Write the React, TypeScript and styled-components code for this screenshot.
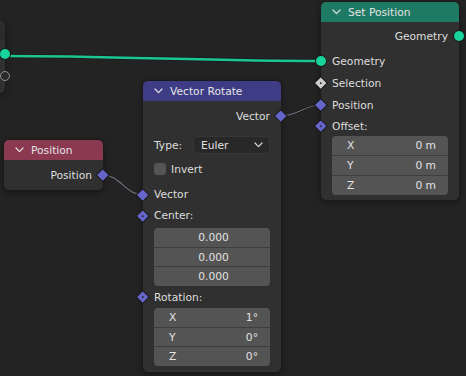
import styled, { createGlobalStyle } from "styled-components";

const GlobalStyle = createGlobalStyle`
  html, body {
    margin: 0;
    padding: 0;
    background: #232323;
  }
  body {
    font-family: "DejaVu Sans", "Liberation Sans", sans-serif;
  }
`;

type Side = "left" | "right";
type Kind = "geo" | "geoEmpty" | "vec" | "vecDot" | "selDot";

const Chevron = () => (
  <svg width="9" height="6" viewBox="0 0 9 6">
    <polyline
      points="1,1 4.5,4.6 8,1"
      fill="none"
      stroke="#e2e2e2"
      strokeWidth="1.2"
      strokeLinecap="round"
      strokeLinejoin="round"
    />
  </svg>
);

const Socket = ({ kind, side }: { kind: Kind; side: Side }) => {
  if (kind === "geo") return <Circle $side={side} />;
  if (kind === "geoEmpty") return <Ring $side={side} />;
  return (
    <Diamond $side={side} $color={kind === "selDot" ? "#cfcfcf" : "#6565cc"}>
      {kind !== "vec" && <Dot />}
    </Diamond>
  );
};

const Links = () => (
  <LinkLayer width="466" height="376" viewBox="0 0 466 376">
    <path
      d="M 5 56 C 110 56, 214 61, 321 61"
      fill="none"
      stroke="#161616"
      strokeWidth="4"
      opacity="0.6"
    />
    <path
      d="M 5 56 C 110 56, 214 61, 321 61"
      fill="none"
      stroke="#1cc692"
      strokeWidth="2.4"
    />
    <path
      d="M 103 175 C 120 175, 126 195, 143 195"
      fill="none"
      stroke="#1a1a1a"
      strokeWidth="2.6"
      opacity="0.7"
    />
    <path
      d="M 103 175 C 120 175, 126 195, 143 195"
      fill="none"
      stroke="#6b6b78"
      strokeWidth="1.2"
    />
    <path
      d="M 281 116 C 298 116, 304 105, 321 105"
      fill="none"
      stroke="#1a1a1a"
      strokeWidth="2.6"
      opacity="0.7"
    />
    <path
      d="M 281 116 C 298 116, 304 105, 321 105"
      fill="none"
      stroke="#6b6b78"
      strokeWidth="1.2"
    />
  </LinkLayer>
);

const App = () => {
  return (
    <>
      <GlobalStyle />
      <Canvas>
        <Links />

        {/* partly hidden node on the left edge */}
        <Node $x={-130} $y={20} $w={135}>
          <Header $color="#2b2b2b" />
          <Body $top={3} $bottom={6}>
            <Row $h={22} $out>
              <Socket kind="geo" side="right" />
            </Row>
            <Row $h={22} $out>
              <Socket kind="geoEmpty" side="right" />
            </Row>
          </Body>
        </Node>

        <Node $x={321} $y={2} $w={138}>
          <Header $color="#1e7a62">
            <Chevron />
            <Title>Set Position</Title>
          </Header>
          <Body $top={3} $bottom={5}>
            <Row $h={22} $out>
              Geometry
              <Socket kind="geo" side="right" />
            </Row>
            <Row $h={22} $mt={3}>
              <Socket kind="geo" side="left" />
              Geometry
            </Row>
            <Row $h={22}>
              <Socket kind="selDot" side="left" />
              Selection
            </Row>
            <Row $h={22}>
              <Socket kind="vec" side="left" />
              Position
            </Row>
            <Row $h={20}>
              <Socket kind="vecDot" side="left" />
              Offset:
            </Row>
            <Fields $h={59}>
              <Field>
                <span>X</span>
                <span>0 m</span>
              </Field>
              <Field>
                <span>Y</span>
                <span>0 m</span>
              </Field>
              <Field>
                <span>Z</span>
                <span>0 m</span>
              </Field>
            </Fields>
          </Body>
        </Node>

        <Node $x={143} $y={81} $w={138}>
          <Header $color="#3d3c85">
            <Chevron />
            <Title>Vector Rotate</Title>
          </Header>
          <Body $top={4} $bottom={6}>
            <Row $h={22} $out>
              Vector
              <Socket kind="vec" side="right" />
            </Row>
            <Row $h={20} $mt={8}>
              Type:
              <Dropdown>
                Euler
                <svg width="9" height="6" viewBox="0 0 9 6">
                  <polyline
                    points="1,1 4.5,4.6 8,1"
                    fill="none"
                    stroke="#d8d8d8"
                    strokeWidth="1.2"
                    strokeLinecap="round"
                    strokeLinejoin="round"
                  />
                </svg>
              </Dropdown>
            </Row>
            <Row $h={20} $mt={4}>
              <Checkbox />
              Invert
            </Row>
            <Row $h={21} $mt={5}>
              <Socket kind="vec" side="left" />
              Vector
            </Row>
            <Row $h={21}>
              <Socket kind="vecDot" side="left" />
              Center:
            </Row>
            <Fields $h={58} $mt={2}>
              <Field $center>0.000</Field>
              <Field $center>0.000</Field>
              <Field $center>0.000</Field>
            </Fields>
            <Row $h={22}>
              <Socket kind="vecDot" side="left" />
              Rotation:
            </Row>
            <Fields $h={58}>
              <Field>
                <span>X</span>
                <span>1°</span>
              </Field>
              <Field>
                <span>Y</span>
                <span>0°</span>
              </Field>
              <Field>
                <span>Z</span>
                <span>0°</span>
              </Field>
            </Fields>
          </Body>
        </Node>

        <Node $x={4} $y={140} $w={99}>
          <Header $color="#8a3951">
            <Chevron />
            <Title>Position</Title>
          </Header>
          <Body $top={4} $bottom={4}>
            <Row $h={22} $out>
              Position
              <Socket kind="vec" side="right" />
            </Row>
          </Body>
        </Node>
      </Canvas>
    </>
  );
};

const Canvas = styled.div`
  position: relative;
  width: 466px;
  height: 376px;
  overflow: hidden;
  background: #232323;
  font-size: 10.7px;
  color: #dedede;
`;

const LinkLayer = styled.svg`
  position: absolute;
  left: 0;
  top: 0;
`;

const Node = styled.div<{ $x: number; $y: number; $w: number }>`
  position: absolute;
  left: ${(p) => p.$x}px;
  top: ${(p) => p.$y}px;
  width: ${(p) => p.$w}px;
  display: flex;
  flex-direction: column;
  background: #303030;
  border-radius: 5px;
  box-shadow: 0 0 0 1px #1b1b1b, 0 2px 6px rgba(0, 0, 0, 0.45);
`;

const Header = styled.div<{ $color: string }>`
  height: 20px;
  display: flex;
  align-items: center;
  gap: 6px;
  padding-left: 11px;
  background: ${(p) => p.$color};
  border-radius: 5px 5px 0 0;
  color: #e4e4e4;
`;

const Title = styled.span`
  margin-left: 1px;
`;

const Body = styled.div<{ $top: number; $bottom: number }>`
  display: flex;
  flex-direction: column;
  padding: ${(p) => p.$top}px 11px ${(p) => p.$bottom}px;
`;

const Row = styled.div<{ $h: number; $mt?: number; $out?: boolean }>`
  position: relative;
  height: ${(p) => p.$h}px;
  margin-top: ${(p) => p.$mt ?? 0}px;
  display: flex;
  align-items: center;
  justify-content: ${(p) => (p.$out ? "flex-end" : "flex-start")};
  white-space: nowrap;
`;

const Circle = styled.div<{ $side: Side }>`
  position: absolute;
  top: 50%;
  ${(p) => p.$side}: -16px;
  width: 10px;
  height: 10px;
  margin-top: -5px;
  border-radius: 50%;
  background: #17d39c;
  box-shadow: 0 0 0 1px #1a1a1a;
`;

const Ring = styled.div<{ $side: Side }>`
  position: absolute;
  top: 50%;
  ${(p) => p.$side}: -16px;
  width: 8px;
  height: 8px;
  margin-top: -5px;
  border-radius: 50%;
  border: 1px solid #8f8f8f;
  background: #2a2a2a;
`;

const Diamond = styled.div<{ $side: Side; $color: string }>`
  position: absolute;
  top: 50%;
  ${(p) => p.$side}: -14.75px;
  width: 7.5px;
  height: 7.5px;
  margin-top: -3.75px;
  transform: rotate(45deg);
  background: ${(p) => p.$color};
  box-shadow: 0 0 0 1px #1a1a1a;
  display: flex;
  align-items: center;
  justify-content: center;
`;

const Dot = styled.div`
  width: 2.5px;
  height: 2.5px;
  border-radius: 50%;
  background: #2b2b2b;
`;

const Fields = styled.div<{ $h: number; $mt?: number }>`
  height: ${(p) => p.$h}px;
  margin-top: ${(p) => p.$mt ?? 0}px;
  display: flex;
  flex-direction: column;
  border-radius: 4px;
  overflow: hidden;
  background: #545454;
`;

const Field = styled.div<{ $center?: boolean }>`
  flex: 1;
  display: flex;
  align-items: center;
  justify-content: ${(p) => (p.$center ? "center" : "space-between")};
  padding: 0 12px 0 15px;
  color: #e2e2e2;
  & + & {
    border-top: 1px solid #3e3e3e;
  }
`;

const Dropdown = styled.div`
  margin-left: auto;
  width: 77px;
  height: 18px;
  box-sizing: border-box;
  display: flex;
  align-items: center;
  justify-content: space-between;
  padding: 0 6px 0 7px;
  background: #282828;
  border: 1px solid #363636;
  border-radius: 4px;
  color: #e0e0e0;
`;

const Checkbox = styled.div`
  width: 12px;
  height: 12px;
  margin-right: 5px;
  border-radius: 3px;
  background: #545454;
`;

export default App;
